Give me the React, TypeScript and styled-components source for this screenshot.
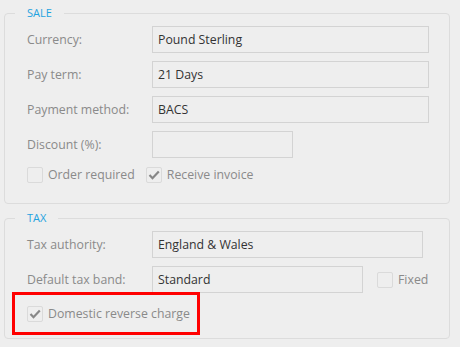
import React from "react";
import styled, { createGlobalStyle } from "styled-components";

const GlobalStyle = createGlobalStyle`
  html, body {
    margin: 0;
    padding: 0;
    background: #eeeeee;
  }
  body {
    font-family: "Open Sans", "Noto Sans", sans-serif;
    font-size: 12.3px;
  }
`;

const Page = styled.div`
  width: 446px;
  padding: 5px 0 0 4px;
  display: flex;
  flex-direction: column;
  gap: 6px;
`;

const Group = styled.fieldset<{ bottom: number }>`
  margin: 0;
  padding: 5px 0 ${p => p.bottom}px 0;
  border: 1px solid #dcdcdc;
  border-radius: 4px;
  min-width: 0;
  display: flex;
  flex-direction: column;
  gap: 8px;
`;

const Legend = styled.legend`
  margin-left: 10px;
  padding: 0 12px;
  font-size: 11px;
  line-height: 16px;
  color: #1fa3e0;
`;

const Row = styled.div`
  display: flex;
  align-items: center;
  height: 27px;
  padding-left: 22px;
`;

const Label = styled.span`
  width: 125px;
  flex: none;
  color: #8a8a8a;
`;

const Input = styled.div<{ width: number }>`
  box-sizing: border-box;
  width: ${p => p.width}px;
  height: 27px;
  border: 1px solid #d3d3d3;
  padding: 0 5px;
  display: flex;
  align-items: center;
  color: #333333;
`;

const CheckRow = styled.div`
  display: flex;
  align-items: center;
  gap: 11px;
  height: 17px;
  padding-left: 22px;
`;

const Check = styled.label<{ ml?: number }>`
  display: inline-flex;
  align-items: center;
  gap: 5px;
  color: #8a8a8a;
  white-space: nowrap;
  margin-left: ${p => p.ml ?? 0}px;
`;

const Box = styled.span`
  box-sizing: border-box;
  width: 16px;
  height: 16px;
  border: 1px solid #dadada;
  border-radius: 2px;
  display: inline-flex;
  align-items: center;
  justify-content: center;
`;

const Highlight = styled.div`
  box-sizing: border-box;
  width: 188px;
  height: 43px;
  margin: -9px 0 0 7px;
  border: 3px solid #ff0000;
  display: flex;
  align-items: center;
  padding-left: 12px;
`;

function CheckBox({ checked, label, ml }: { checked?: boolean; label: string; ml?: number }) {
  return (
    <Check ml={ml}>
      <Box>
        {checked && (
          <svg width="12" height="10" viewBox="0 0 12 10">
            <path d="M1.5 5 L4.5 8.2 L10.8 1.5" fill="none" stroke="#878787" strokeWidth="2.2" />
          </svg>
        )}
      </Box>
      {label}
    </Check>
  );
}

export default function App() {
  return (
    <>
      <GlobalStyle />
      <Page>
        <Group bottom={20}>
          <Legend>SALE</Legend>
          <Row>
            <Label>Currency:</Label>
            <Input width={277}>Pound Sterling</Input>
          </Row>
          <Row>
            <Label>Pay term:</Label>
            <Input width={277}>21 Days</Input>
          </Row>
          <Row>
            <Label>Payment method:</Label>
            <Input width={277}>BACS</Input>
          </Row>
          <Row>
            <Label>Discount (%):</Label>
            <Input width={141} />
          </Row>
          <CheckRow>
            <CheckBox label="Order required" />
            <CheckBox checked label="Receive invoice" />
          </CheckRow>
        </Group>
        <Group bottom={3}>
          <Legend>TAX</Legend>
          <Row>
            <Label>Tax authority:</Label>
            <Input width={271}>England &amp; Wales</Input>
          </Row>
          <Row>
            <Label>Default tax band:</Label>
            <Input width={211}>Standard</Input>
            <CheckBox label="Fixed" ml={14} />
          </Row>
          <Highlight>
            <CheckBox checked label="Domestic reverse charge" />
          </Highlight>
        </Group>
      </Page>
    </>
  );
}
